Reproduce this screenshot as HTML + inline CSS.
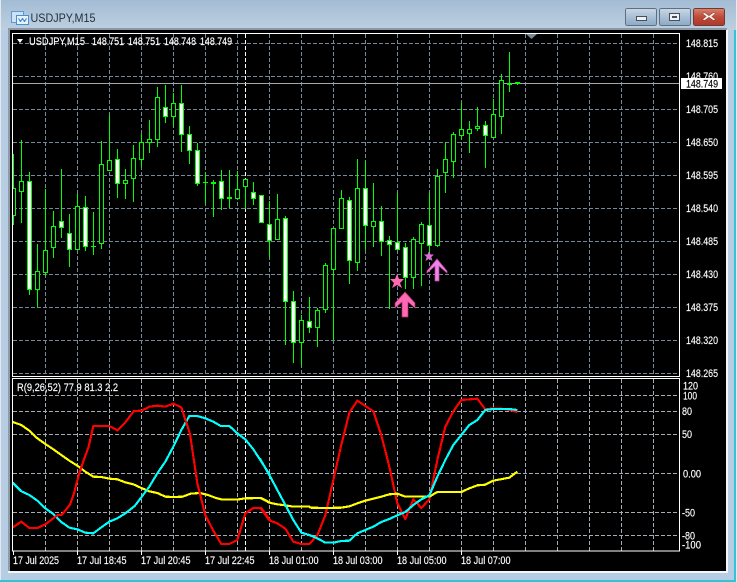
<!DOCTYPE html>
<html><head><meta charset="utf-8"><title>USDJPY,M15</title>
<style>
html,body{margin:0;padding:0;width:737px;height:582px;overflow:hidden;background:#dfe6ec}
svg{display:block;position:absolute;left:0;top:0}
text{font-family:"Liberation Sans",sans-serif;font-size:11px;fill:#fff;stroke:#fff;stroke-width:.15px}
.c{shape-rendering:crispEdges}
.g{stroke:#778899;stroke-width:1;stroke-dasharray:4 2;fill:none}
.gi{stroke:#a4adb6;stroke-width:1;stroke-dasharray:4 2;fill:none}
.w{stroke:#00ff00;stroke-width:1;fill:none}
.h{stroke:#00ff00;stroke-width:1;fill:#000}
.f{stroke:#00ff00;stroke-width:1;fill:#fff}
</style></head><body>
<svg width="737" height="582" viewBox="0 0 737 582">
<defs>
<linearGradient id="tb" x1="0" y1="0" x2="0" y2="1"><stop offset="0" stop-color="#a3bcd4"/><stop offset="1" stop-color="#bdd0e1"/></linearGradient>
<linearGradient id="bn" x1="0" y1="0" x2="0" y2="1"><stop offset="0" stop-color="#c9d8e6"/><stop offset=".5" stop-color="#a9bfd4"/><stop offset="1" stop-color="#8ba9c6"/></linearGradient>
<linearGradient id="cl" x1="0" y1="0" x2="0" y2="1"><stop offset="0" stop-color="#d9826f"/><stop offset=".5" stop-color="#bf4a38"/><stop offset="1" stop-color="#b0382c"/></linearGradient>
</defs>
<!-- window frame -->
<rect x="0" y="0" width="737" height="582" fill="#e4e9ee"/>
<rect x="1" y="0" width="735" height="582" fill="#b6cde4"/>
<rect x="1" y="0" width="735" height="30" fill="url(#tb)"/>
<rect x="0" y="580" width="736" height="2" fill="#2fc4d6"/>
<rect x="734" y="30" width="2" height="552" fill="#2fc4d6"/>
<rect x="8" y="28" width="719" height="2" fill="#8a98a6"/>
<rect x="8" y="30" width="2" height="542" fill="#8f9ba6"/>
<rect x="10" y="30" width="716" height="541" fill="#000"/>
<rect x="8" y="571" width="719" height="2" fill="#f4f7fa"/>
<rect x="726" y="30" width="2" height="543" fill="#f4f7fa"/>
<!-- title icon -->
<g class="c">
<rect x="11.5" y="11.5" width="12" height="11" fill="#cfe2f5" stroke="#5b9bd5"/>
<rect x="16.5" y="15.5" width="12" height="9" fill="#e8f2fb" stroke="#4a8fd0"/>
<path d="M18.5 18.5l2 3 2-3 2 3 2-3" fill="none" stroke="#3b86cc"/>
</g>
<text x="30.5" y="22" textLength="65" lengthAdjust="spacingAndGlyphs" style="font-size:12px;fill:#24303c;stroke:none">USDJPY,M15</text>
<!-- buttons -->
<g class="c">
<rect x="625.5" y="8.5" width="31" height="17" rx="2" fill="url(#bn)" stroke="#5e6f80"/>
<rect x="636.5" y="16.5" width="10" height="4" fill="#eef2f6" stroke="#44505c"/>
<rect x="659.5" y="8.5" width="31" height="17" rx="2" fill="url(#bn)" stroke="#5e6f80"/>
<rect x="669.5" y="13.5" width="10" height="7" fill="#eef2f6" stroke="#44505c"/>
<rect x="672" y="16" width="5" height="2" fill="#44505c"/>
<rect x="693.5" y="8.5" width="31" height="17" rx="2" fill="url(#cl)" stroke="#6e3a34"/>
</g>
<path d="M704.5 12.5l4.5 3.2 4.5-3.2 2 1-3.7 3 3.7 3-2 1-4.5-3.2-4.5 3.2-2-1 3.7-3-3.7-3z" fill="#f4f1ee" stroke="#7a3a30" stroke-width=".5"/>

<!-- main chart grid -->
<g class="c">
<path class="g" d="M13 43.5H679M13 76.5H679M13 109.5H679M13 142.5H679M13 175.5H679M13 208.5H679M13 241.5H679M13 274.5H679M13 307.5H679M13 340.5H679M13 373.5H679"/>
<path class="g" d="M45.5 34V376M77.5 34V376M109.5 34V376M141.5 34V376M173.5 34V376M205.5 34V376M237.5 34V376M269.5 34V376M301.5 34V376M333.5 34V376M365.5 34V376M397.5 34V376M429.5 34V376M461.5 34V376M493.5 34V376M525.5 34V376M557.5 34V376M589.5 34V376M621.5 34V376M653.5 34V376"/>
<path d="M245.5 34V376" stroke="#fff" stroke-dasharray="4 2" fill="none"/>
<path d="M13 83.5H680" stroke="#a3a8ad" fill="none"/>

<path class="w" d="M13.5 154V225M21.5 140V223M29.5 172V295M37.5 244V307M45.5 189V275M53.5 211V258M61.5 169V238M69.5 214V267M77.5 194V250M85.5 196V251M93.5 212V255M101.5 141V249M109.5 115V170M117.5 149V198M125.5 169V199M133.5 145V202M141.5 134V167M149.5 120V153M157.5 87V147M165.5 85V123M173.5 93V127M181.5 85V152M189.5 126V164M197.5 143V186M205.5 172V204M213.5 180V217M221.5 170V210M229.5 170V208M237.5 171V198M245.5 179V209M253.5 182V205M261.5 195V223M269.5 201V258M277.5 194V239M285.5 216V345M293.5 291V363M301.5 315V366M309.5 297V333M317.5 308V347M325.5 263V313M333.5 228V340M341.5 190V228M349.5 197V284M357.5 159V271M365.5 161V250M373.5 183V247M381.5 206V256M389.5 236V309M397.5 193V250M405.5 243V289M413.5 237V289M421.5 222V286M429.5 193V256M437.5 169V247M445.5 142V193M453.5 132V178M461.5 103V140M469.5 121V153M477.5 107V131M485.5 121V168M493.5 99V137M501.5 74V134M509.5 52V92M517.5 82V85"/>
<path class="h" d="M11.5 188.5h4V215.5h-4zM19.5 181.5h4V191.5h-4zM35.5 271.5h4V289.5h-4zM43.5 250.5h4V272.5h-4zM51.5 226.5h4V247.5h-4zM75.5 206.5h4V249.5h-4zM99.5 164.5h4V243.5h-4zM107.5 160.5h4V170.5h-4zM123.5 180.5h4V183.5h-4zM131.5 158.5h4V178.5h-4zM139.5 142.5h4V159.5h-4zM147.5 139.5h4V142.5h-4zM155.5 97.5h4V139.5h-4zM171.5 103.5h4V116.5h-4zM235.5 189.5h4V198.5h-4zM243.5 179.5h4V186.5h-4zM275.5 219.5h4V239.5h-4zM299.5 320.5h4V342.5h-4zM315.5 310.5h4V327.5h-4zM323.5 265.5h4V309.5h-4zM331.5 228.5h4V269.5h-4zM339.5 198.5h4V228.5h-4zM355.5 188.5h4V262.5h-4zM371.5 221.5h4V226.5h-4zM411.5 239.5h4V277.5h-4zM419.5 224.5h4V243.5h-4zM435.5 176.5h4V245.5h-4zM443.5 159.5h4V172.5h-4zM451.5 134.5h4V161.5h-4zM459.5 129.5h4V135.5h-4zM467.5 129.5h4V133.5h-4zM475.5 126.5h4V128.5h-4zM491.5 114.5h4V137.5h-4zM499.5 80.5h4V116.5h-4z"/>
<path class="f" d="M27.5 181.5h4V289.5h-4zM59.5 221.5h4V227.5h-4zM67.5 233.5h4V249.5h-4zM83.5 207.5h4V246.5h-4zM115.5 159.5h4V183.5h-4zM163.5 107.5h4V116.5h-4zM179.5 103.5h4V134.5h-4zM187.5 134.5h4V150.5h-4zM195.5 150.5h4V183.5h-4zM219.5 181.5h4V198.5h-4zM251.5 192.5h4V198.5h-4zM259.5 195.5h4V222.5h-4zM267.5 224.5h4V240.5h-4zM283.5 218.5h4V301.5h-4zM291.5 301.5h4V342.5h-4zM307.5 321.5h4V327.5h-4zM347.5 200.5h4V260.5h-4zM363.5 188.5h4V225.5h-4zM379.5 221.5h4V241.5h-4zM387.5 240.5h4V244.5h-4zM395.5 242.5h4V249.5h-4zM403.5 247.5h4V277.5h-4zM427.5 225.5h4V245.5h-4zM483.5 125.5h4V135.5h-4z"/>
<path d="M91 246h5v1h-5zM203 182h5v1h-5zM211 182h5v2h-5zM227 197h5v2h-5zM507 83h5v2h-5zM515 82h5v2h-5z" fill="#00ff00"/>
<rect x="10" y="34" width="3" height="342" fill="#000"/>
</g>

<!-- markers -->
<polygon points="405,292 415,303 415,308 408,302 408,317 402,317 402,302 395,308 395,303" fill="#ff69b4" stroke="#b03070" stroke-width=".7"/>
<polygon points="437,259 447,271 447,273 439,266 439,281 435,281 435,266 427,273 427,271" fill="#ee82ee" stroke="#c04890" stroke-width=".7"/>
<polygon points="397,274 399,279 404,279 400,283 402,288 397,285 392,288 394,283 390,279 395,279" fill="#ff69b4"/>
<polygon points="429,251 430.5,254.5 434,254.5 431.3,257 432.5,261 429,258.7 425.5,261 426.7,257 424,254.5 427.5,254.5" fill="#da70d6"/>

<!-- indicator grid -->
<g class="c">
<path class="gi" d="M13 395.5H679M13 411.5H679M13 434.5H679M13 473.5H679M13 512.5H679M13 535.5H679"/>
<path class="gi" d="M45.5 379V551M77.5 379V551M109.5 379V551M141.5 379V551M173.5 379V551M205.5 379V551M237.5 379V551M269.5 379V551M301.5 379V551M333.5 379V551M365.5 379V551M397.5 379V551M429.5 379V551M461.5 379V551M493.5 379V551M525.5 379V551M557.5 379V551M589.5 379V551M621.5 379V551M653.5 379V551"/>
<path d="M245.5 379V551" stroke="#fff" stroke-dasharray="4 2" fill="none"/>
</g>

<!-- indicator lines (first half) -->
<g transform="translate(0,370) scale(.33333)" fill="none" stroke-width="6.5" stroke-linejoin="round" shape-rendering="crispEdges">
<polyline stroke="#ffff00" points="38,156 64,165 88,182 112,205 136,222 160,238 184,255 208,272 232,287 256,305 280,320 304,321 328,326 352,328 376,337 400,343 424,354 448,364 472,369 496,380 520,381 548,380 572,371 600,369 624,375 648,384 668,389 692,389 716,388 736,385 784,384 810,398"/>
<polyline stroke="#00ffff" points="38,338 64,364 88,375 112,392 136,415 160,432 184,456 208,473 232,478 256,488 280,490 304,472 328,455 352,445 376,430 404,408 424,382 448,350 472,310 496,275 520,230 544,180 568,138 592,138 616,145 640,155 662,168 688,168 712,190 736,208 760,238 784,275 810,315"/>
<polyline stroke="#ff0000" points="38,472 64,455 88,474 112,474 136,463 160,445 172,436 186,434 210,404 222,370 236,316 250,274 266,230 280,168 328,168 352,181 376,157 402,123 426,122 448,110 472,107 496,110 520,101 544,112 570,192 592,340 616,436 640,482 664,522 688,522 712,510 736,430 760,414 784,414 810,450"/>
</g>
<!-- indicator lines (second half) -->
<g transform="translate(260,370) scale(.33333)" fill="none" stroke-width="6.5" stroke-linejoin="round" shape-rendering="crispEdges">
<polyline stroke="#ff0000" points="0,412 28,451 52,460 76,476 100,515 124,522 148,522 172,496 196,436 220,330 244,224 268,128 292,92 340,124 364,196 388,290 412,400 436,447 460,388 484,414 508,388 532,270 556,170 580,124 604,90 652,86 676,118 700,115 724,116 748,120 772,126"/>
<polyline stroke="#ffff00" points="0,383 28,398 52,403 76,406 100,410 148,410 152,413 196,414 244,413 268,409 292,400 316,392 340,386 364,380 388,373 412,371 436,380 508,380 532,366 604,366 628,355 652,346 676,344 700,332 748,323 772,305"/>
<polyline stroke="#00ffff" points="0,266 28,315 52,360 76,405 100,450 124,488 148,495 172,505 196,518 220,518 244,513 268,512 292,490 316,480 340,470 364,456 388,447 412,436 436,426 460,405 484,388 508,376 532,320 556,270 580,225 604,195 628,165 652,150 676,120 700,117 748,117 772,120"/>
</g>

<!-- borders -->
<g class="c" fill="none" stroke="#fff">
<rect x="12.5" y="33.5" width="667" height="343"/>
<rect x="12.5" y="378.5" width="667" height="172.5"/>
<path d="M13.5 551V555M77.5 551V555M141.5 551V555M205.5 551V555M269.5 551V555M333.5 551V555M397.5 551V555M461.5 551V555"/>
</g>
<polygon points="526,34 537,34 531.5,39" fill="#778899"/>
<polygon points="17,39 23,39 20,43" fill="#fff"/>

<!-- header texts -->
<text x="29" y="45" textLength="56" lengthAdjust="spacingAndGlyphs">USDJPY,M15</text>
<text x="92" y="45" textLength="32" lengthAdjust="spacingAndGlyphs">148.751</text>
<text x="128" y="45" textLength="32" lengthAdjust="spacingAndGlyphs">148.751</text>
<text x="164" y="45" textLength="32" lengthAdjust="spacingAndGlyphs">148.748</text>
<text x="200" y="45" textLength="32" lengthAdjust="spacingAndGlyphs">148.749</text>
<text x="17" y="391" textLength="101" lengthAdjust="spacingAndGlyphs">R(9,26,52) 77.9 81.3 2.2</text>

<!-- price axis -->
<g>
<text x="686" y="47" textLength="32" lengthAdjust="spacingAndGlyphs">148.815</text>
<text x="686" y="80" textLength="32" lengthAdjust="spacingAndGlyphs">148.760</text>
<text x="686" y="113" textLength="32" lengthAdjust="spacingAndGlyphs">148.705</text>
<text x="686" y="146" textLength="32" lengthAdjust="spacingAndGlyphs">148.650</text>
<text x="686" y="179" textLength="32" lengthAdjust="spacingAndGlyphs">148.595</text>
<text x="686" y="212" textLength="32" lengthAdjust="spacingAndGlyphs">148.540</text>
<text x="686" y="245" textLength="32" lengthAdjust="spacingAndGlyphs">148.485</text>
<text x="686" y="278" textLength="32" lengthAdjust="spacingAndGlyphs">148.430</text>
<text x="686" y="311" textLength="32" lengthAdjust="spacingAndGlyphs">148.375</text>
<text x="686" y="344" textLength="32" lengthAdjust="spacingAndGlyphs">148.320</text>
<text x="686" y="377" textLength="32" lengthAdjust="spacingAndGlyphs">148.265</text>
</g>
<rect x="681" y="78" width="41" height="11" fill="#fff"/>
<text x="686" y="87.5" textLength="32" lengthAdjust="spacingAndGlyphs" style="fill:#000;stroke:#000">148.749</text>

<!-- indicator axis -->
<text x="683" y="389.5" textLength="15" lengthAdjust="spacingAndGlyphs">120</text>
<text x="683" y="399.5" textLength="14" lengthAdjust="spacingAndGlyphs">100</text>
<text x="682" y="415" textLength="10" lengthAdjust="spacingAndGlyphs">80</text>
<text x="682" y="438" textLength="10" lengthAdjust="spacingAndGlyphs">50</text>
<text x="683" y="477.5" textLength="18" lengthAdjust="spacingAndGlyphs">0.00</text>
<text x="682" y="516.5" textLength="13" lengthAdjust="spacingAndGlyphs">-50</text>
<text x="682" y="539.5" textLength="13" lengthAdjust="spacingAndGlyphs">-80</text>
<text x="682" y="548.5" textLength="19" lengthAdjust="spacingAndGlyphs">-100</text>

<!-- time axis -->
<text x="13" y="564" textLength="46" lengthAdjust="spacingAndGlyphs">17 Jul 2025</text>
<text x="77" y="564" textLength="49.5" lengthAdjust="spacingAndGlyphs">17 Jul 18:45</text>
<text x="141" y="564" textLength="49.5" lengthAdjust="spacingAndGlyphs">17 Jul 20:45</text>
<text x="205" y="564" textLength="49.5" lengthAdjust="spacingAndGlyphs">17 Jul 22:45</text>
<text x="269" y="564" textLength="49.5" lengthAdjust="spacingAndGlyphs">18 Jul 01:00</text>
<text x="333" y="564" textLength="49.5" lengthAdjust="spacingAndGlyphs">18 Jul 03:00</text>
<text x="397" y="564" textLength="49.5" lengthAdjust="spacingAndGlyphs">18 Jul 05:00</text>
<text x="461" y="564" textLength="49.5" lengthAdjust="spacingAndGlyphs">18 Jul 07:00</text>
</svg>
</body></html>
